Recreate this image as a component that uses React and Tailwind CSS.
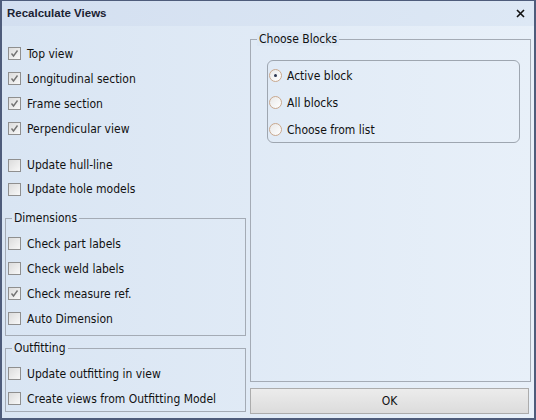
import React from "react";

const font = { fontFamily: '"DejaVu Sans Condensed", "Liberation Sans", Arial, sans-serif' };

function Check({ checked }) {
  return (
    <span className="relative inline-block w-[13px] h-[13px] border border-[#8f8f8f] bg-gradient-to-br from-[#dcdcdc] to-[#f8f8f8] shrink-0">
      {checked && (
        <svg className="absolute left-[1px] top-[1px]" width="9" height="9" viewBox="0 0 9 9">
          <path d="M1.5 4.5 L3.5 7 L7.5 1.5" stroke="#737373" strokeWidth="1.4" fill="none" />
        </svg>
      )}
    </span>
  );
}

function Row({ label, checked, h = "h-[25px]" }) {
  return (
    <div className={`flex items-center ${h} pl-[6px] gap-[6px] text-[12px] text-[#111]`}>
      <Check checked={checked} />
      <span>{label}</span>
    </div>
  );
}

function Radio({ label, active }) {
  return (
    <div className="flex items-center h-[27px] pl-[1px] gap-[5px] text-[12px] text-[#111]">
      <span className="relative inline-block w-[13px] h-[13px] rounded-full border border-[#c9a88e] bg-gradient-to-br from-[#e8e8e8] to-[#ffffff] shrink-0">
        {active && (
          <span className="absolute left-[4px] top-[4px] w-[3px] h-[3px] rounded-full bg-[#2a3550]" />
        )}
      </span>
      <span>{label}</span>
    </div>
  );
}

function Group({ title, className, children }) {
  return (
    <div className={`relative border border-[#a4abb5] ${className}`}>
      <span className="absolute left-[6px] top-[-8px] px-[2px] bg-[#dce7f4] text-[12px] leading-[14px] text-[#111]">{title}</span>
      {children}
    </div>
  );
}

export default function App() {
  return (
    <div style={font} className="w-[536px] h-[420px] bg-[#4e5c7b] p-[2px] pt-[1px] flex flex-col">
      <div className="h-[25px] flex items-center justify-between pl-[5px] pr-[9px] bg-gradient-to-r from-[#d3dff0] to-[#dde8f5]">
        <span className="text-[11.5px] font-bold text-[#1b2233] font-['Liberation_Sans',Arial,sans-serif]">Recalculate Views</span>
        <svg width="9" height="9" viewBox="0 0 9 9">
          <path d="M1 1 L8 8 M8 1 L1 8" stroke="#111" strokeWidth="1.6" />
        </svg>
      </div>
      <div className="flex-1 flex bg-gradient-to-r from-[#d9e5f3] to-[#e8f0f9] pr-[3px] pb-[1px]">
        <div className="w-[244px] flex flex-col pt-[15px]">
          <Row label="Top view" checked />
          <Row label="Longitudinal section" checked />
          <Row label="Frame section" checked />
          <Row label="Perpendicular view" checked />
          <div className="h-[12px]" />
          <Row label="Update hull-line" h="h-[24px]" />
          <Row label="Update hole models" h="h-[24px]" />
          <Group title="Dimensions" className="ml-[3px] mt-[17px] h-[118px] pt-[12px]">
            <div className="-ml-[4px]">
              <Row label="Check part labels" />
              <Row label="Check weld labels" />
              <Row label="Check measure ref." checked />
              <Row label="Auto Dimension" />
            </div>
          </Group>
          <Group title="Outfitting" className="ml-[3px] mt-[12px] h-[64px] pt-[12px]">
            <div className="-ml-[4px]">
              <Row label="Update outfitting in view" />
              <Row label="Create views from Outfitting Model" />
            </div>
          </Group>
        </div>
        <div className="flex-1 flex flex-col pl-[4px] pt-[13px]">
          <Group title="Choose Blocks" className="h-[343px] pt-[20px] pl-[16px] pr-[10px]">
            <div className="rounded-[6px] border border-[#9ea6b0] h-[83px] pt-[1px]">
              <Radio label="Active block" active />
              <Radio label="All blocks" />
              <Radio label="Choose from list" />
            </div>
          </Group>
          <button className="mt-[6px] h-[26px] w-[279px] border border-[#acacac] bg-gradient-to-b from-[#ececec] to-[#dcdcdc] text-[12px] text-[#111]">
            OK
          </button>
        </div>
      </div>
    </div>
  );
}
